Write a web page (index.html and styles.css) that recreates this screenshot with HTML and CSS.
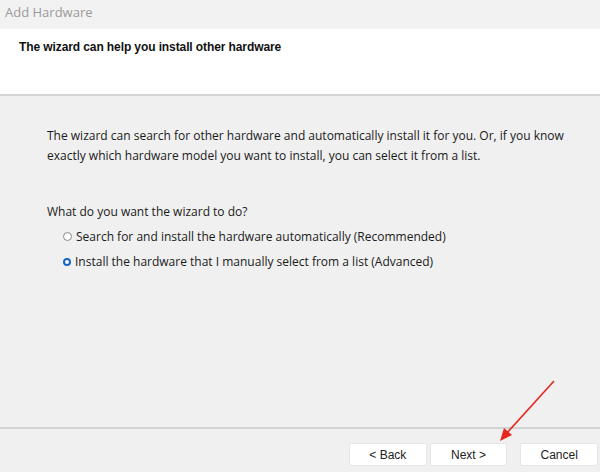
FILE: index.html
```html
<!DOCTYPE html>
<html>
<head>
<meta charset="utf-8">
<link rel="stylesheet" href="styles.css">
</head>
<body>
<div class="window">
  <div class="titlebar">Add Hardware</div>
  <div class="header">The wizard can help you install other hardware</div>
  <div class="content">
    <p class="intro">The wizard can search for other hardware and automatically install it for you. Or, if you know exactly which hardware model you want to install, you can select it from a list.</p>
    <p class="question">What do you want the wizard to do?</p>
    <div class="options">
      <label class="option"><span class="radio"></span>Search for and install the hardware automatically (Recommended)</label>
      <label class="option"><span class="radio checked"></span>Install the hardware that I manually select from a list (Advanced)</label>
    </div>
  </div>
  <div class="footer">
    <div class="btn">&lt; Back</div>
    <div class="btn">Next &gt;</div>
    <div class="btn cancel">Cancel</div>
  </div>
  <svg class="arrow" width="70" height="70" viewBox="0 0 70 70">
    <line x1="62" y1="3" x2="14" y2="56" stroke="#e8271f" stroke-width="1.6"/>
    <polygon points="8,63 12,50 20,57" fill="#e8271f"/>
  </svg>
</div>
</body>
</html>
```
FILE: styles.css
```css
html, body { margin: 0; padding: 0; }
body { width: 600px; height: 472px; overflow: hidden; background: #f0f0f0; }
.window { position: relative; width: 600px; height: 472px; display: flex; flex-direction: column; background: #f0f0f0; }
.titlebar { height: 29px; box-sizing: border-box; background: #f2f2f2; color: #9a9a9a; font-family: "Open Sans", "Noto Sans", sans-serif; font-size: 13px; padding: 3px 0 0 5px; }
.header { height: 67px; box-sizing: border-box; background: #fff; border-bottom: 2px solid #d4d4d4; font-family: "Liberation Sans", Arial, sans-serif; font-weight: bold; font-size: 12px; letter-spacing: -0.1px; color: #111; padding: 11px 0 0 19px; }
.content { flex: 1; padding: 30px 20px 0 47px; font-family: "Open Sans", "Noto Sans", sans-serif; font-size: 12px; color: #1a1a1a; }
.intro { margin: 0; line-height: 20px; }
.question { margin: 36px 0 0; line-height: 19px; }
.options { display: flex; flex-direction: column; gap: 6px; margin-top: 6px; padding-left: 16px; }
.option { display: flex; align-items: center; line-height: 19px; }
.radio { width: 7px; height: 7px; border: 1px solid #8a8a8a; border-radius: 50%; background: #fff; margin-right: 4px; box-sizing: content-box; }
.radio.checked { border: 2px solid #1764c8; width: 4px; height: 4px; background: #fff; margin-right: 4px; }
.footer { height: 45px; box-sizing: border-box; border-top: 2px solid #d2d2d2; display: flex; align-items: flex-start; padding: 14px 2px 0 349px; gap: 3px; font-family: "Liberation Sans", Arial, sans-serif; font-size: 12px; color: #222; }
.btn { width: 78px; height: 23px; box-sizing: border-box; background: #fff; border: 1px solid #e6e6e6; border-radius: 2px; display: flex; align-items: center; justify-content: center; }
.btn.cancel { margin-left: 10px; }
.arrow { position: absolute; left: 492px; top: 378px; }
```
